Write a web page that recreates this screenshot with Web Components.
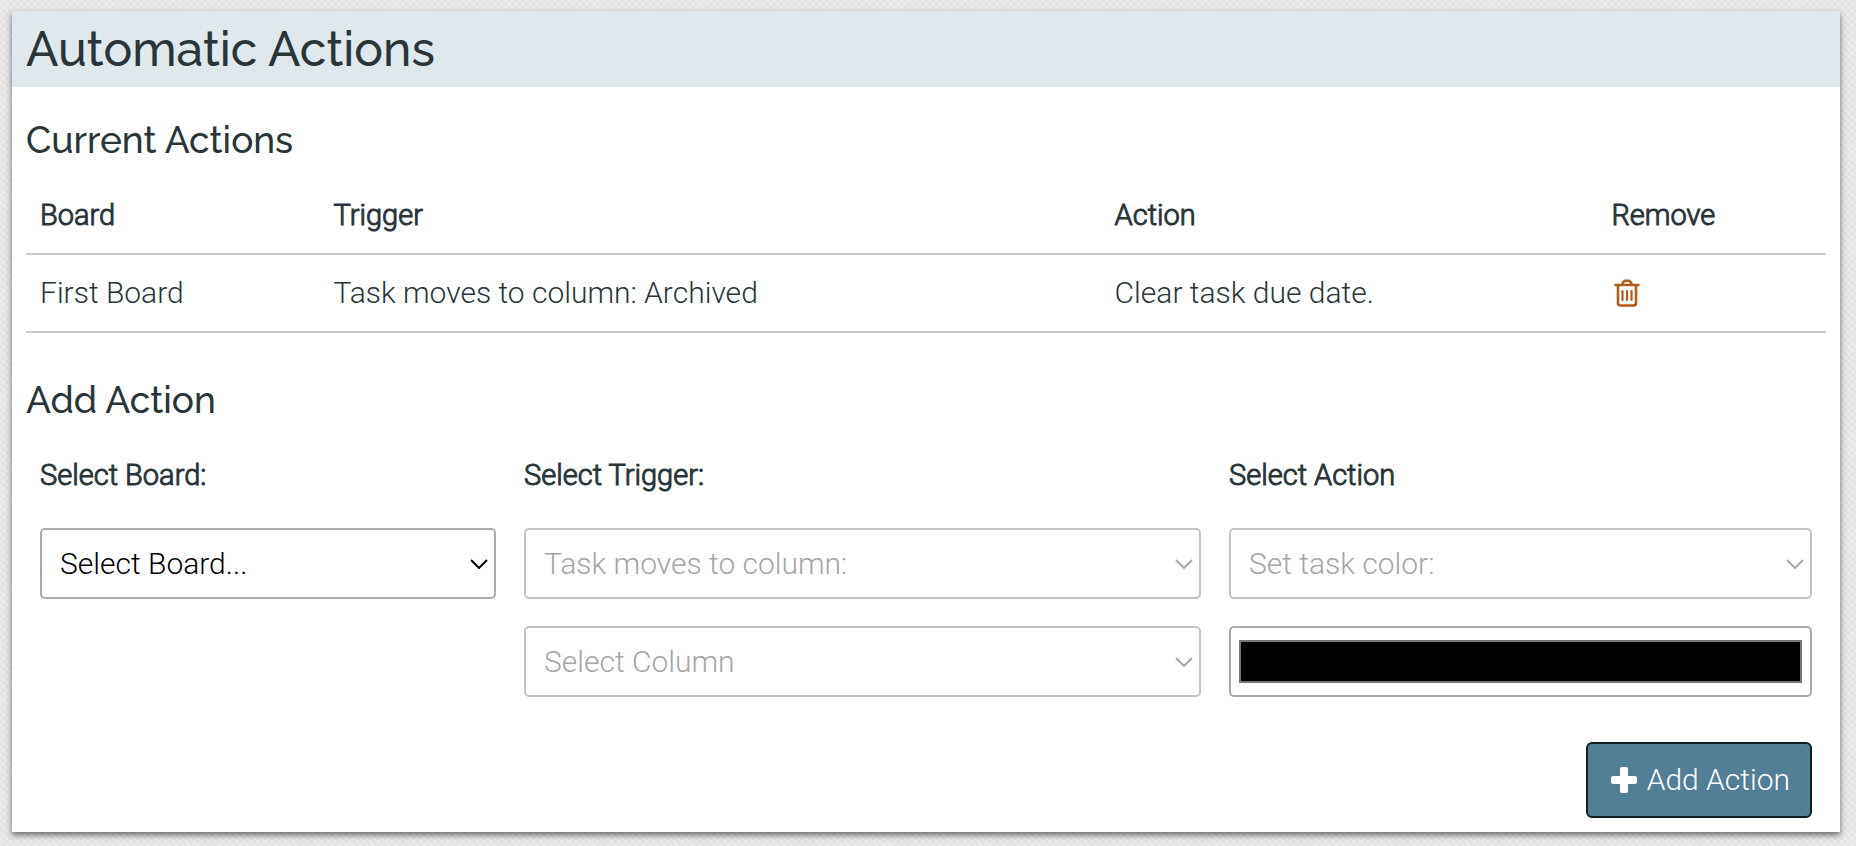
<!DOCTYPE html>
<html lang="en">
<head>
<meta charset="utf-8">
<meta name="viewport" content="width=device-width, initial-scale=1">
<title>Automatic Actions</title>
<style>
  html { background: #e6e6e6; }
  body {
    margin: 0;
    padding: 11px 16px 15px 12px;
    font: 300 30px/38px Roboto, "Liberation Sans", sans-serif;
    color: #293539;
    --heading: Raleway, Inter, sans-serif;
    background:
      repeating-linear-gradient(45deg, rgba(255,255,255,.25) 0 2px, transparent 2px 5px),
      repeating-linear-gradient(-45deg, rgba(0,0,0,.02) 0 2px, transparent 2px 5px);
  }
</style>
</head>
<body>
<automatic-actions></automatic-actions>

<script>
const define = (name, html, setup) => {
  const template = document.createElement('template');
  template.innerHTML = html;
  customElements.define(name, class extends HTMLElement {
    constructor() {
      super();
      this.attachShadow({ mode: 'open' }).append(template.content.cloneNode(true));
    }
    connectedCallback() { if (setup) setup(this, this.shadowRoot); }
  });
};

define('section-panel', `
  <style>
    :host { display: block; background: #fff; box-shadow: 0 3px 6px rgba(0,0,0,.55); }
    h1 { margin: 0; padding: 8px 14px; background: #dfe8ed; font: 500 48px/60px var(--heading); }
    .body { padding: 32px 14px 14px; }
  </style>
  <h1><slot name="title"></slot></h1>
  <div class="body"><slot></slot></div>`);

define('section-heading', `
  <style>
    :host { display: block; }
    h2 { margin: 0; font: 500 37px/42px var(--heading); }
  </style>
  <h2><slot></slot></h2>`);

define('trash-icon', `
  <style>:host { display: block; width: 26px; height: 28px; } svg { display: block; }</style>
  <svg width="26" height="28" viewBox="0 0 26 28" fill="none" stroke="#b35a1a" aria-hidden="true">
    <path stroke-width="2.6" stroke-linejoin="round" d="M.5 6H25.5M8 6L9.3 3L11 1.7H15L16.7 3L18 6M4 6V24Q4 26.5 6.5 26.5H19.5Q22 26.5 22 24V6"/>
    <path stroke-width="2.2" stroke-linecap="round" d="M8.5 12V21M13 12V21M17.5 12V21"/>
  </svg>`);

define('actions-table', `
  <style>
    :host { display: block; }
    table { width: 100%; border-collapse: collapse; table-layout: fixed; }
    th, td { height: 76px; padding: 0 14px; border-bottom: 2px solid #ccc; text-align: left; font-weight: 300; }
    th { font-size: 29px; -webkit-text-stroke: 1px currentColor; }
    .board { width: 16.3%; } .trigger { width: 43.4%; } .action { width: 27.6%; }
    button { display: block; margin: 0; padding: 0 3px; border: 0; background: none; cursor: pointer; }
  </style>
  <table>
    <colgroup><col class="board"><col class="trigger"><col class="action"><col></colgroup>
    <thead><tr><th>Board</th><th>Trigger</th><th>Action</th><th>Remove</th></tr></thead>
    <tbody><tr>
      <td>First Board</td><td>Task moves to column: Archived</td><td>Clear task due date.</td>
      <td><button type="button" aria-label="Remove action"><trash-icon></trash-icon></button></td>
    </tr></tbody>
  </table>`);

define('select-field', `
  <style>
    :host { display: grid; }
    :host([disabled]) { opacity: .7; }
    select, svg { grid-area: 1 / 1; }
    select {
      appearance: none; box-sizing: border-box; width: 100%; height: 71px; margin: 0; padding: 0 36px 0 18px;
      border: 2px solid #aaa; border-radius: 5px; background: #fff; color: #000; font: inherit; opacity: 1;
    }
    select:disabled { color: #808080; }
    svg { place-self: center end; margin-right: 8px; pointer-events: none; color: #000; }
    :host([disabled]) svg { color: #808080; }
  </style>
  <select><option></option></select>
  <svg width="18" height="10" viewBox="0 0 18 10" fill="none" stroke="currentColor" stroke-width="2" aria-hidden="true"><path d="M1 1L9 9L17 1"/></svg>`,
  (host, root) => {
    const select = root.querySelector('select');
    select.disabled = host.hasAttribute('disabled');
    select.setAttribute('aria-label', host.getAttribute('label'));
    root.querySelector('option').textContent = host.getAttribute('value');
  });

define('color-field', `
  <style>
    :host { display: block; }
    input {
      appearance: none; display: block; box-sizing: border-box; width: 100%; height: 71px; margin: 0; padding: 12px 8px;
      border: 2px solid #aaa; border-radius: 5px; background: #fff;
    }
    input::-webkit-color-swatch-wrapper { padding: 0; }
    input::-webkit-color-swatch { border: 2px solid #777; border-radius: 0; }
  </style>
  <input type="color" value="#000000" aria-label="Task color">`);

define('field-group', `
  <style>
    :host { display: flex; flex-direction: column; gap: 27px; min-width: 0; }
    h3 { margin: 0 0 7px; font: inherit; font-size: 29px; -webkit-text-stroke: 1px currentColor; }
  </style>
  <h3><slot name="label"></slot></h3>
  <slot></slot>`);

define('add-button', `
  <style>
    :host { display: block; }
    button {
      display: flex; align-items: center; gap: 10px; box-sizing: border-box; height: 76px; margin: 0; padding: 0 20px 0 23px;
      border: 2px solid #131e22; border-radius: 6px; background: #527e96; color: #fff; font: inherit; cursor: pointer;
    }
  </style>
  <button type="button">
    <svg width="26" height="26" viewBox="0 0 26 26" fill="currentColor" aria-hidden="true"><path d="M11 0H15Q17 0 17 2V9H24Q26 9 26 11V15Q26 17 24 17H17V24Q17 26 15 26H11Q9 26 9 24V17H2Q0 17 0 15V11Q0 9 2 9H9V2Q9 0 11 0Z"/></svg>
    <slot></slot>
  </button>`);

define('add-action-form', `
  <style>
    :host { display: block; padding: 0 14px; }
    .fields { display: grid; grid-template-columns: 456fr 677fr 583fr; gap: 28px; }
    .submit { display: flex; justify-content: flex-end; padding-top: 45px; }
  </style>
  <div class="fields">
    <field-group><span slot="label">Select Board:</span>
      <select-field label="Select Board" value="Select Board..."></select-field></field-group>
    <field-group><span slot="label">Select Trigger:</span>
      <select-field label="Select Trigger" value="Task moves to column:" disabled></select-field>
      <select-field label="Select Column" value="Select Column" disabled></select-field></field-group>
    <field-group><span slot="label">Select Action</span>
      <select-field label="Select Action" value="Set task color:" disabled></select-field>
      <color-field></color-field></field-group>
  </div>
  <div class="submit"><add-button>Add Action</add-button></div>`);

define('automatic-actions', `
  <style>
    :host { display: block; }
    actions-table { margin: 16px 0 46px; }
    add-action-form { margin-top: 35px; }
  </style>
  <section-panel>
    <span slot="title">Automatic Actions</span>
    <section-heading>Current Actions</section-heading>
    <actions-table></actions-table>
    <section-heading>Add Action</section-heading>
    <add-action-form></add-action-form>
  </section-panel>`);
</script>
</body>
</html>
